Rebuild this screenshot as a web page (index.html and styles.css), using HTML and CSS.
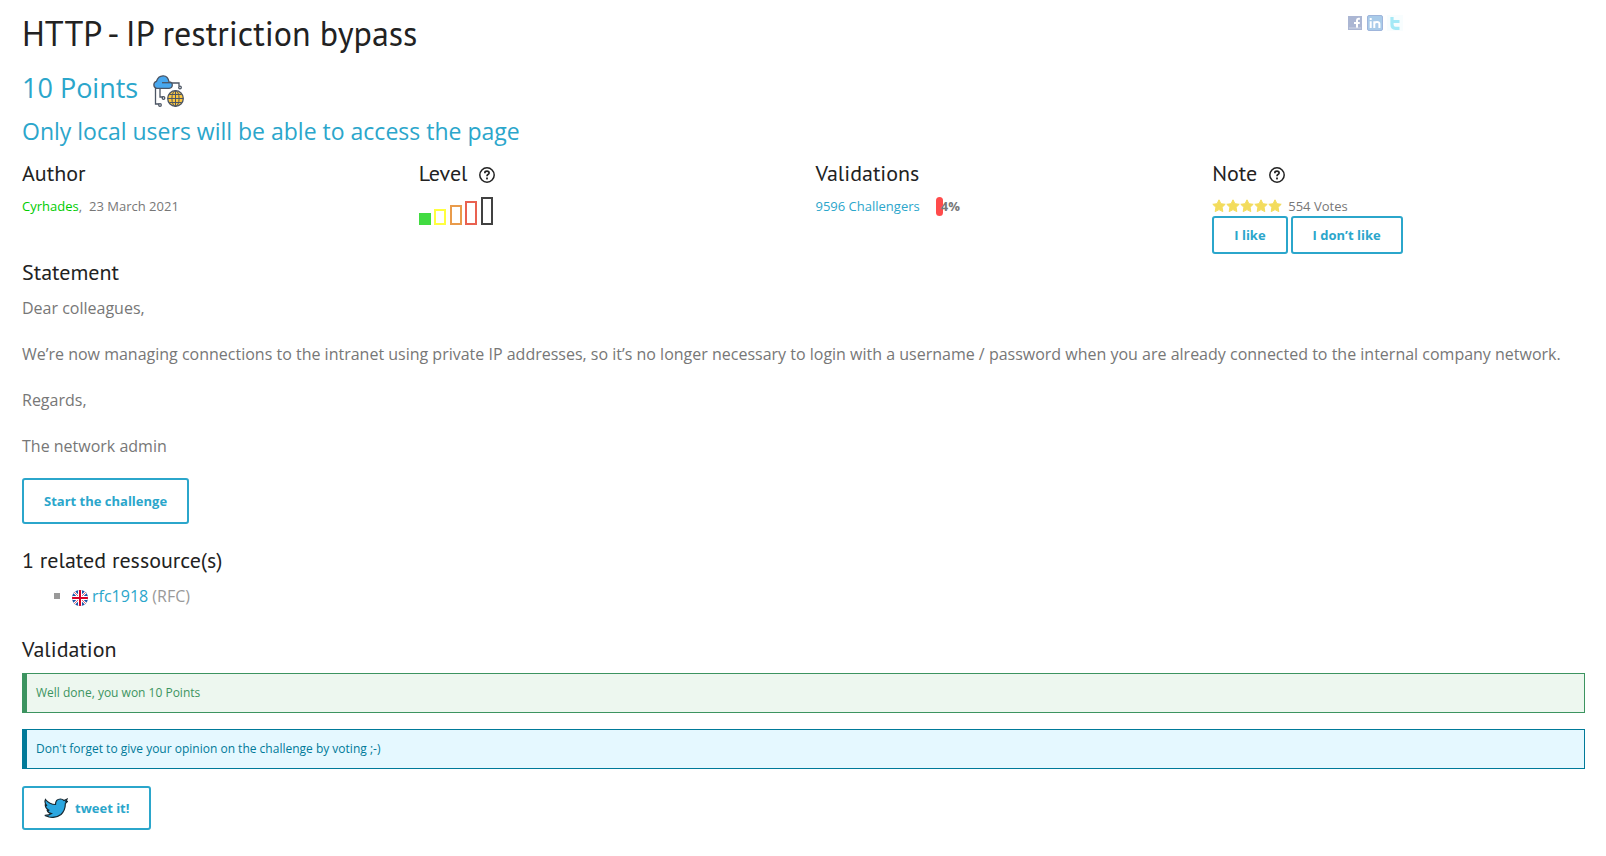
FILE: index.html
```html
<!DOCTYPE html>
<html lang="en">
<head>
<meta charset="utf-8">
<title>HTTP - IP restriction bypass</title>
<link rel="stylesheet" href="styles.css">
</head>
<body>
<svg class="defs" aria-hidden="true">
  <symbol id="help" viewBox="0 0 16 16">
    <circle cx="8" cy="8" r="7.2" fill="none" stroke="#222" stroke-width="1.5"/>
    <path d="M5.9 6.3V5.6Q5.9 4.2 8 4.2T10.100 5.900Q10.100 6.900 8.900 7.500Q8 8 8 9.300" fill="none" stroke="#222" stroke-width="1.700"/>
    <rect x="7.100" y="10.500" width="1.800" height="1.900" fill="#222"/>
  </symbol>
  <symbol id="star" viewBox="0 0 14 14">
    <path d="M7 .8l1.900 3.900 4.300.6-3.100 3 .7 4.300L7 10.600l-3.800 2 .7-4.300-3.100-3 4.300-.6z" fill="#f3dc5c" stroke="#f3dc5c" stroke-linejoin="round"/>
  </symbol>
</svg>
<main class="page">
  <header class="top">
    <h1 class="title">HTTP - IP restriction bypass</h1>
    <nav class="share" aria-label="Share">
      <a href="#" aria-label="Facebook"><svg viewBox="0 0 16 16"><path fill="#abb6d3" d="M1 1h14v14H1z"/><path d="M12.900 3.800h-1.500Q10 3.800 10 5.300V13M7 7.900h5.800" fill="none" stroke="#fff" stroke-width="2"/><path d="M2 13h12" stroke="#d0d7e7"/></svg></a>
      <a href="#" aria-label="LinkedIn"><svg viewBox="0 0 16 16"><rect x=".5" y=".5" width="15" height="15" rx="1.500" fill="#a9cbe9" stroke="#9fb5db"/><path d="M3.700 6.300V13M3.700 3v2M7.300 13V6.300M7.300 9Q7.500 7 10 7T12.400 9v4" fill="none" stroke="#fff" stroke-width="2"/></svg></a>
      <a href="#" aria-label="Twitter"><svg viewBox="0 0 16 16"><path fill="#f8fdfe" d="M0 0h16v16H0z"/><path d="M5 2v7.500Q5 13.300 8.500 13.300H12.500M5 6.500h7.500" fill="none" stroke="#a5e9f6" stroke-width="3.200"/></svg></a>
    </nav>
  </header>
  <h2 class="points">10 Points
    <svg class="category" viewBox="0 0 32 32" fill="none" stroke="#4c5564" stroke-width="1.300">
      <path d="M3.500 13v16H7M8 13v9h3M19 8h8v3"/>
      <path d="M4.500 13.400A3.700 3.700 0 0 1 4.500 6.300Q6 1 11 .8T17 6.900Q20.300 7 20.300 10T17 13.400z" fill="#48a8ef"/>
      <path d="M10 7.700h9"/>
      <circle cx="8" cy="30" r="1.300"/><circle cx="11.500" cy="23" r="1.300"/><circle cx="28" cy="12.500" r="1.300"/>
      <circle cx="23.500" cy="23.500" r="7.800" fill="#fcc73f"/>
      <ellipse cx="23.500" cy="23.500" rx="3.600" ry="7.800" stroke-width="1"/><path d="M23.500 16v15M16 23.500h15M17.500 19.500h12M17.500 27.500h12" stroke-width="1"/>
    </svg>
  </h2>
  <p class="subtitle">Only local users will be able to access the page</p>

  <section class="facts">
    <div>
      <h3 class="heading">Author</h3>
      <p class="meta"><span><a class="author" href="#">Cyrhades</a>,</span><span>23 March 2021</span></p>
    </div>
    <div>
      <h3 class="heading">Level <svg class="help"><use href="#help"/></svg></h3>
      <svg class="level" viewBox="0 0 74 28" role="img" aria-label="Very easy" fill="none" stroke-width="2">
        <path d="M0 16h12v12H0z" fill="#41db41"/>
        <path d="M16 13h10v14H16z" stroke="#ffff3f"/>
        <path d="M32 9h10v18H32z" stroke="#e99b4b"/>
        <path d="M47 5h10v22H47z" stroke="#e96150"/>
        <path d="M63 1h10v26H63z" stroke="#414141"/>
      </svg>
    </div>
    <div>
      <h3 class="heading">Validations</h3>
      <p class="meta validations"><a href="#">9596 Challengers</a><span class="gauge"><b>4%</b></span></p>
    </div>
    <div>
      <h3 class="heading">Note <svg class="help"><use href="#help"/></svg></h3>
      <p class="meta votes-count"><span class="stars"><svg><use href="#star"/></svg><svg><use href="#star"/></svg><svg><use href="#star"/></svg><svg><use href="#star"/></svg><svg><use href="#star"/></svg></span><span>554 Votes</span></p>
      <div class="votes"><button class="button small">I like</button><button class="button small">I don’t like</button></div>
    </div>
  </section>

  <section class="statement">
    <h3 class="heading">Statement</h3>
    <p>Dear colleagues,</p>
    <p>We’re now managing connections to the intranet using private IP addresses, so it’s no longer necessary to login with a username / password when you are already connected to the internal company network.</p>
    <p>Regards,</p>
    <p>The network admin</p>
    <button class="button large">Start the challenge</button>
  </section>

  <section class="resources">
    <h3 class="heading">1 related ressource(s)</h3>
    <ul class="links">
      <li><svg class="flag" viewBox="0 0 16 16">
        <clipPath id="disc"><circle cx="8" cy="8" r="8"/></clipPath>
        <g clip-path="url(#disc)"><path fill="#1d55a8" d="M0 0h16v16H0z"/><path d="M0 0l16 16M16 0L0 16" stroke="#fff" stroke-width="2.400"/><path d="M0 0l16 16M16 0L0 16" stroke="#e0627a"/><path d="M8 0v16M0 8h16" stroke="#fff" stroke-width="4"/><path d="M8 0v16M0 8h16" stroke="#d80027" stroke-width="2"/></g>
      </svg><span><a href="#">rfc1918</a> (RFC)</span></li>
    </ul>
  </section>

  <section class="validation">
    <h3 class="heading">Validation</h3>
    <p class="notice success">Well done, you won 10 Points</p>
    <p class="notice info">Don't forget to give your opinion on the challenge by voting ;-)</p>
    <button class="button tweet"><svg viewBox="0 0 24 20"><path d="M1.500 1.500Q5.500 6.500 11.500 6.500Q11.500 1 16.500 1Q18.500 1 20 2.500L23 1.200 21.800 3.600 23.500 3.500 21.300 5.700Q21.500 12 17 16.500Q12 20.500 5 19L.8 17.400Q5 17.500 7.500 15.500Q4 15 3.200 12.300H5.300Q1.500 10.500 1.300 7.200L3 7.800Q0 5 1.500 1.500z" fill="#2ca7e0" stroke="#17272f" stroke-width="1.200"/></svg>tweet it!</button>
  </section>
</main>
</body>
</html>
```
FILE: styles.css
```css
* { box-sizing: border-box; }
body {
  margin: 0;
  background: #fff;
  color: #777;
  font-family: "Open Sans", "Noto Sans", sans-serif;
  font-size: 16px;
  line-height: 26px;
}
h1, h2, h3, p, ul { margin: 0; padding: 0; font-weight: 400; }
a { color: #2ba6cb; text-decoration: none; }
.defs { display: none; }
.page { padding: 9px 21px 24px 22px; }

.top { display: flex; justify-content: space-between; align-items: flex-start; }
.title { color: #222; font-family: "PT Sans", "Open Sans", sans-serif; font-size: 34px; line-height: 48px; }
.share { display: flex; gap: 4px; padding: 6px 182px 0 0; }
.share svg { display: block; width: 16px; height: 16px; }

.points { display: flex; align-items: center; gap: 14px; margin-top: 13px; color: #2ba6cb; font-size: 27px; line-height: 36px; }
.category { width: 32px; height: 32px; margin: 5px 0 -1px; }
.subtitle { margin-top: 8px; color: #2ba6cb; font-size: 23px; line-height: 34px; }

.heading { display: flex; align-items: center; gap: 12px; color: #222; font-family: "PT Sans", "Open Sans", sans-serif; font-size: 22px; line-height: 30px; }
.help { width: 16px; height: 16px; margin-top: 4px; }

.facts { display: grid; grid-template-columns: repeat(4, 1fr); gap: 24px; margin-top: 10px; }
.meta { display: flex; align-items: center; gap: 7px; margin-top: 8px; font-size: 13px; line-height: 20px; }
.author { color: #00cc00; }
.level { display: block; width: 74px; height: 28px; margin-top: 9px; }
.validations { gap: 16px; }
.votes-count { gap: 6px; }
.gauge { width: 7px; height: 19px; border-radius: 4px; background: #ff4b4b; line-height: 19px; }
.gauge b { margin-left: 5px; }
.stars { display: flex; }
.stars svg { width: 14px; height: 14px; }
.votes { display: flex; gap: 3px; }

.button {
  display: inline-flex;
  align-items: center;
  gap: 7px;
  padding: 0 20px;
  border: 2px solid #2ba6cb;
  border-radius: 3px;
  background: #fff;
  color: #2ba6cb;
  font: 700 13px/20px "Open Sans", "Noto Sans", sans-serif;
}
.small { padding-block: 7px; }
.large { padding-block: 11px; }
.tweet { padding-block: 10px; }
.tweet svg { width: 24px; height: 20px; }

.statement { margin-top: 3px; }
.statement .heading { margin-bottom: 8px; }
.statement p { margin-bottom: 20px; }
.statement p:last-of-type { margin-bottom: 19px; }

.resources { margin-top: 21px; }
.links { display: flex; flex-direction: column; margin-top: 8px; padding-left: 32px; list-style: none; color: #999; }
.links li { display: flex; align-items: center; gap: 4px; }
.links li::before { content: ""; width: 6px; height: 6px; margin-right: 8px; background: #999; }
.flag { width: 16px; height: 16px; margin-top: 3px; }

.validation { margin-top: 25px; }
.notice { margin: 9px 0 17px; padding: 9px; border: 1px solid; border-left-width: 5px; font-size: 12px; line-height: 20px; }
.success { margin-bottom: 16px; border-color: #3c9460; background: #edf7ef; color: #3c9460; }
.info { margin-top: 0; border-color: #007a99; background: #e5f8ff; color: #007a99; }
```
